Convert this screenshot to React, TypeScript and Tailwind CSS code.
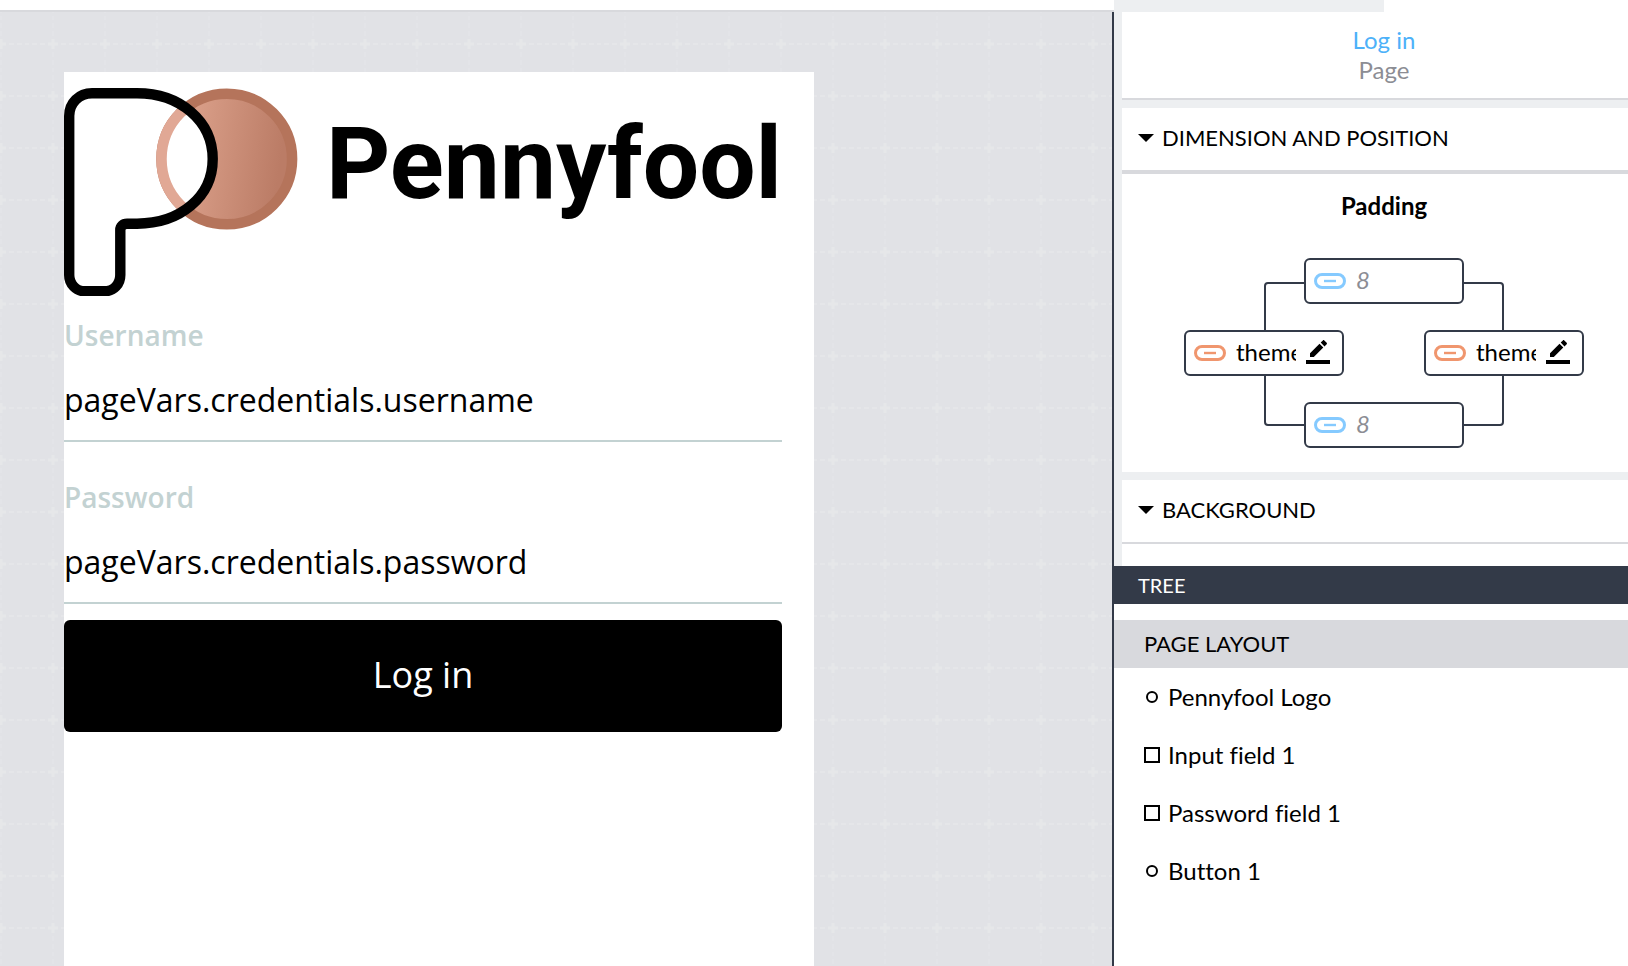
import { useState } from 'react';
import type { ReactNode } from 'react';

const treeItems = [
  { name: 'Pennyfool Logo', shape: 'circle' },
  { name: 'Input field 1', shape: 'square' },
  { name: 'Password field 1', shape: 'square' },
  { name: 'Button 1', shape: 'circle' },
];

const P_SHAPE =
  'M28 5.3H73C116 5.3 148.7 33 148.7 71C148.7 109 116 135.7 73 135.7H63C59 135.7 56.3 138.5 56.3 142V187C56.3 196 50 203.3 40 203.3H21C12 203.3 5.2 196 5.2 187V28C5.2 15 15 5.3 28 5.3Z';

function Logo() {
  return (
    <div className="flex h-[208px]">
      <svg className="w-60 h-[208px] shrink-0" viewBox="0 0 240 208" fill="none" aria-hidden="true">
        <defs>
          <linearGradient id="copper" x1="84" y1="0" x2="224" y2="20" gradientUnits="userSpaceOnUse">
            <stop offset="0.35" stopColor="#d99e88" />
            <stop offset="1" stopColor="#bb7c66" />
          </linearGradient>
          <clipPath id="inside-p">
            <path d={P_SHAPE} />
          </clipPath>
        </defs>
        <circle cx="162.8" cy="71" r="65.3" fill="url(#copper)" stroke="#b5745b" strokeWidth="10.5" />
        <circle cx="162.8" cy="71" r="65.3" fill="#fff" stroke="#e1a895" strokeWidth="10.5" clipPath="url(#inside-p)" />
        <path d={P_SHAPE} stroke="#000" strokeWidth="10.4" />
      </svg>
      <h1 className="ml-[22px] mt-6 whitespace-nowrap font-['Roboto'] text-[100px] leading-[104px] font-bold text-black">Pennyfool</h1>
    </div>
  );
}

function Field({ id, label, binding }: { id: string; label: string; binding: string }) {
  return (
    <div className="flex flex-col pt-6">
      <label htmlFor={id} className="text-[28px] leading-[30px] font-semibold text-[#c3d2d2]">{label}</label>
      <input
        id={id}
        defaultValue={binding}
        className="h-[92px] w-full border-b-2 border-[#c3d2d2] pt-2 text-[32px] text-black outline-none"
      />
    </div>
  );
}

function Canvas() {
  return (
    <main className="relative flex-1 min-w-0 overflow-hidden bg-[#e1e2e6] pt-[60px] pl-16">
      <svg className="absolute inset-0 h-full w-full" aria-hidden="true">
        <defs>
          <pattern id="grid" x="-25" y="6" width="52" height="52" patternUnits="userSpaceOnUse">
            <path d="M0 26H2M5 26H10M13 26H18M34 26H39M42 26H47M50 26H52" stroke="#e5e6e9" strokeWidth="2" />
            <path d="M26 0V2M26 5V10M26 13V18M26 34V39M26 42V47M26 50V52" stroke="#e3e4e8" strokeWidth="2" />
            <path d="M21 26H31M26 21V31" stroke="#e6e7e9" strokeWidth="3" />
          </pattern>
        </defs>
        <rect width="100%" height="100%" fill="url(#grid)" />
      </svg>
      <div className="relative h-full w-[750px] bg-white pt-4 pr-8 font-['Open_Sans',sans-serif]">
        <Logo />
        <form className="flex flex-col gap-4" onSubmit={e => e.preventDefault()}>
          <Field id="username" label="Username" binding="pageVars.credentials.username" />
          <Field id="password" label="Password" binding="pageVars.credentials.password" />
          <button type="submit" className="h-28 rounded-md bg-black pb-0.5 text-4xl text-white">Log in</button>
        </form>
      </div>
    </main>
  );
}

function BindingIcon({ color }: { color: string }) {
  return (
    <svg width="32" height="16" viewBox="0 0 32 16" fill="none" stroke={color} className="shrink-0" aria-hidden="true">
      <rect x="1.5" y="1.5" width="29" height="13" rx="6.5" strokeWidth="3" />
      <path d="M10 8H22" strokeWidth="2.4" />
    </svg>
  );
}

function EditIcon() {
  return (
    <svg width="24" height="24" viewBox="0 0 24 24" fill="#000" aria-hidden="true">
      <path d="M4 13.2V17H7.8L17.3 7.5L13.5 3.7ZM20.7 4.2C21.1 3.8 21.1 3.2 20.7 2.8L18.3 .4C17.9 0 17.3 0 16.9 .4L14.7 2.6L18.5 6.4Z" />
      <path d="M0 20H24V24H0Z" />
    </svg>
  );
}

function PaddingInput({ side, value, className }: { side: string; value?: string; className: string }) {
  return (
    <div className={`relative flex h-[46px] w-40 items-center gap-2.5 rounded-md border-2 border-[#333a48] bg-white px-2 ${className}`}>
      <BindingIcon color={value ? '#f0966e' : '#85caff'} />
      <input
        aria-label={`Padding ${side}`}
        defaultValue={value}
        placeholder="8"
        className="w-[60px] min-w-0 pb-0.5 text-2xl text-black outline-none placeholder:italic placeholder:text-[#8c8d94]"
      />
      {value && (
        <button type="button" aria-label={`Edit padding ${side}`} className="pb-0.5">
          <EditIcon />
        </button>
      )}
    </div>
  );
}

function Section({ title, border, children }: { title: string; border: string; children: ReactNode }) {
  const [open, setOpen] = useState(true);

  return (
    <section className="bg-white">
      <h2 className={`border-[#d8d9dd] ${border}`}>
        <button
          type="button"
          aria-expanded={open}
          onClick={() => setOpen(!open)}
          className="flex h-[62px] w-full items-center gap-2 pb-[3px] pl-4 text-[22px] text-black"
        >
          <svg width="16" height="8" viewBox="0 0 16 8" aria-hidden="true">
            <path d="M0 0H16L8 8Z" />
          </svg>
          {title}
        </button>
      </h2>
      {open && children}
    </section>
  );
}

function Inspector() {
  return (
    <div className="flex flex-col gap-2 bg-[#edeff1] pl-2">
      <header className="border-b-2 border-[#d8d9dd] bg-white pt-[13px] pb-[13px] pl-[18px] text-center text-2xl leading-[30px]">
        <p className="text-[#4db1f9]">Log in</p>
        <p className="text-[#8c8d94]">Page</p>
      </header>

      <Section title="DIMENSION AND POSITION" border="border-b-4">
        <div className="flex flex-col items-center pt-4 pb-6 pl-[18px]">
          <h3 className="text-2xl font-bold text-black">Padding</h3>
          <div className="relative mt-9 grid w-[400px] grid-cols-2 gap-y-[26px]">
            <div className="absolute inset-x-20 top-6 bottom-[22px] rounded border-2 border-[#333a48]" />
            <PaddingInput side="top" className="col-span-2 justify-self-center" />
            <PaddingInput side="left" value="theme." className="" />
            <PaddingInput side="right" value="theme." className="justify-self-end" />
            <PaddingInput side="bottom" className="col-span-2 justify-self-center" />
          </div>
        </div>
      </Section>

      <Section title="BACKGROUND" border="border-b-2">
        <div className="h-[22px]" />
      </Section>
    </div>
  );
}

function Tree() {
  return (
    <section className="flex-1 bg-white">
      <h2 className="flex h-[38px] items-center bg-[#333a48] pb-px pl-6 text-xl text-white">TREE</h2>
      <div className="mt-4 flex h-12 items-center bg-[#d8d9dd] pb-0.5 pl-[30px] text-[22px] text-black">PAGE LAYOUT</div>
      <ul>
        {treeItems.map(item => (
          <li key={item.name}>
            <button type="button" className="flex h-[58px] w-full items-center gap-2 pl-[30px] text-2xl text-black [font-variant-ligatures:none]">
              <svg width="16" height="16" viewBox="0 0 16 16" fill="none" stroke="#000" strokeWidth="2" aria-hidden="true">
                {item.shape === 'circle' ? <circle cx="8" cy="8" r="5" /> : <rect x="1" y="1" width="14" height="14" />}
              </svg>
              {item.name}
            </button>
          </li>
        ))}
      </ul>
    </section>
  );
}

export default function App() {
  return (
    <div className="flex h-screen flex-col overflow-hidden bg-white font-['Lato',sans-serif]">
      <div className="flex h-3 shrink-0">
        <div className="flex-1 border-b-2 border-[#d8d9dd]" />
        <div className="w-[514px]">
          <div className="h-full w-[270px] bg-[#edeff1]" />
        </div>
      </div>
      <div className="flex min-h-0 flex-1">
        <Canvas />
        <aside className="flex w-[516px] shrink-0 flex-col border-l-2 border-[#333a48]">
          <Inspector />
          <Tree />
        </aside>
      </div>
    </div>
  );
}
